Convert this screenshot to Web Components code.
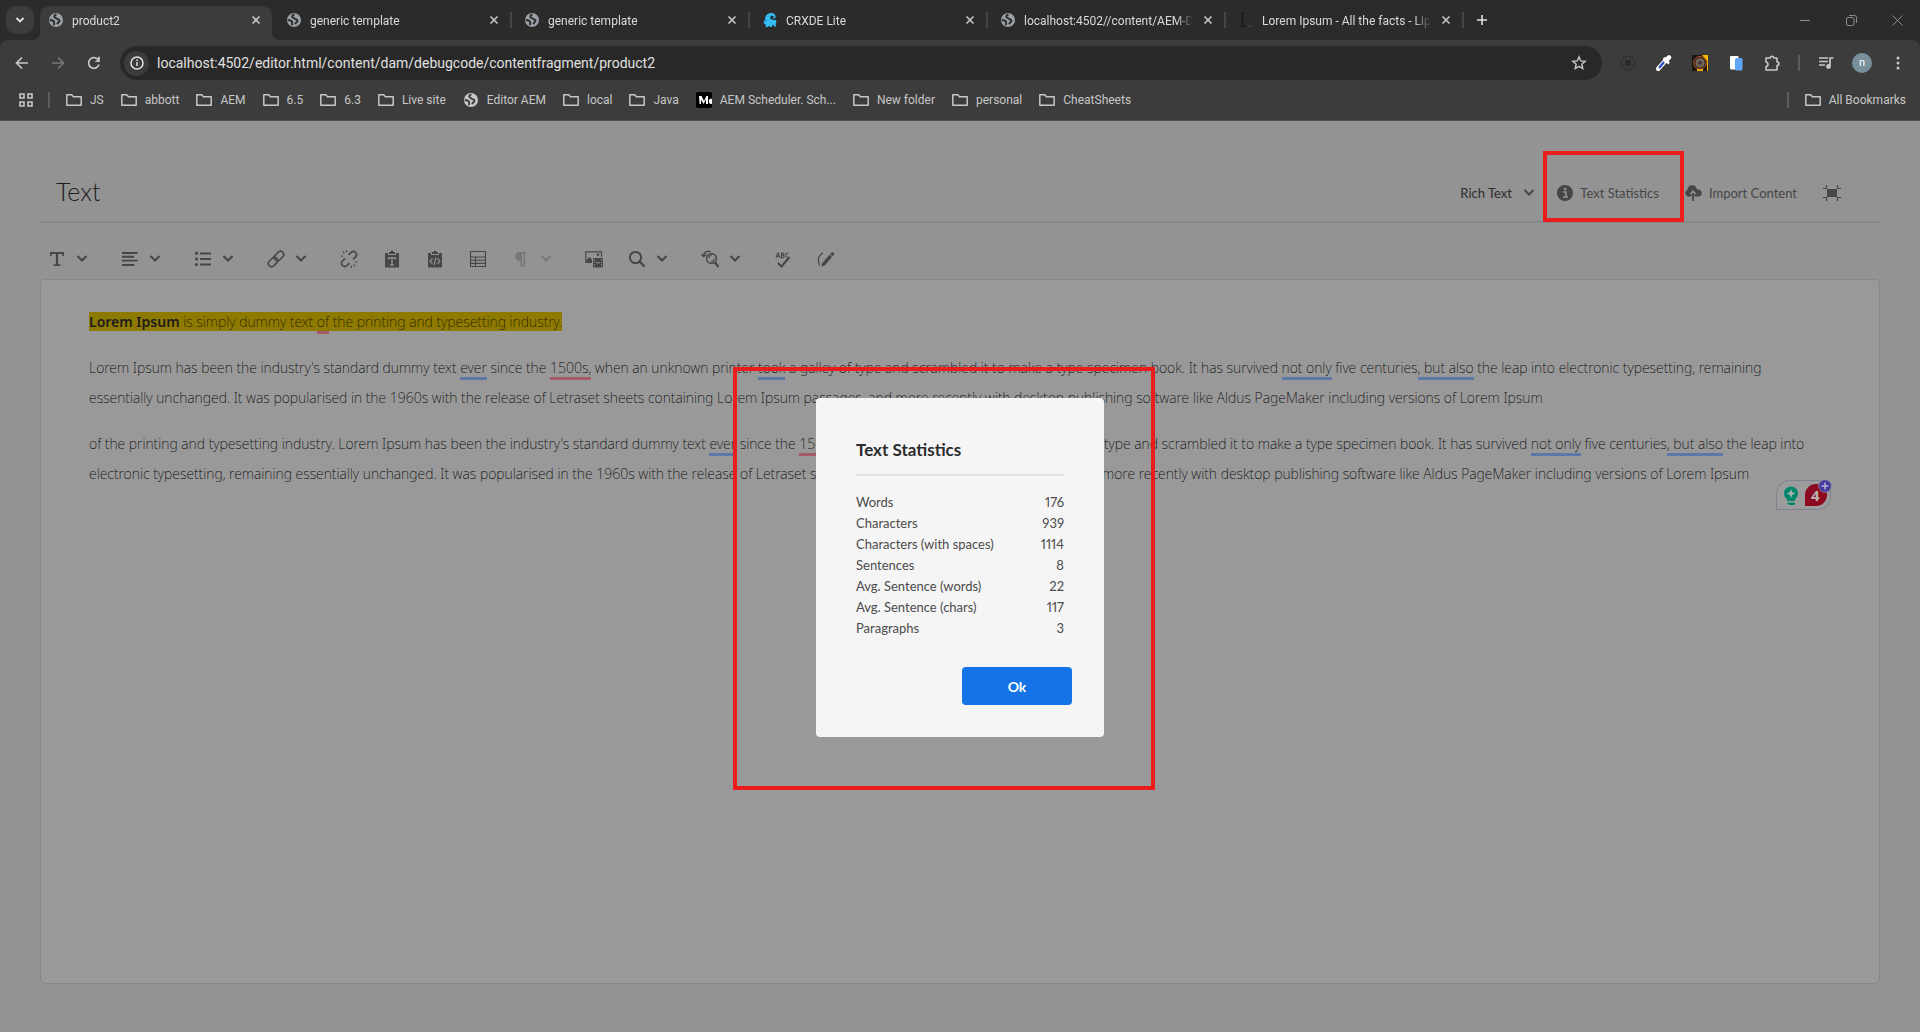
<!DOCTYPE html>
<html lang="en">
<head>
<meta charset="utf-8">
<title>product2</title>
<style>
html, body { margin: 0; height: 100%; }
body { font-family: Roboto, "Noto Sans", sans-serif; }
</style>
</head>
<body>
<app-window></app-window>

<template id="tpl-window">
<style>
:host { display: flex; flex-direction: column; min-height: 100vh; background: #939393; }
</style>
<browser-chrome></browser-chrome>
<editor-page></editor-page>
</template>

<template id="tpl-chrome">
<style>
:host { display: block; background: #2b2b2b; font-size: 12px; color: #e3e3e3; --ui: Roboto, "Noto Sans", sans-serif; font-family: var(--ui); }
button { border: 0; background: none; padding: 0; color: inherit; font: inherit; display: flex; align-items: center; justify-content: center; }
.strip { display: flex; height: 40px; }
.search { width: 28px; height: 28px; margin: 6px; border-radius: 10px; background: #3c3c3c; }
.tabs { display: flex; align-items: stretch; }
.new { width: 28px; }
.win { margin-left: auto; display: flex; color: #8d8d8d; }
.win button { width: 46px; }
.bars { background: #3c3c3c; border-radius: 8px 8px 0 0; border-bottom: 1px solid #4e4e4e; height: 80px; }
.nav { display: flex; align-items: center; height: 46px; padding: 0 4px 0 4px; color: #c7c7c7; }
.nav > button { width: 36px; height: 34px; }
.dim { color: #757575; }
.omni { flex: 1; display: flex; align-items: center; height: 34px; margin: 0 8px 0 8px; border-radius: 17px; background: #282828; }
.omni .info { width: 25px; height: 25px; border-radius: 13px; background: #3c3c3c; margin: 0 8px 0 4px; color: #e3e3e3; }
.omni input { flex: 1; min-width: 0; border: 0; padding: 0; background: none; outline: 0; color: #e0e0e0; font: 14px var(--ui); }
.omni .star { width: 46px; height: 34px; }
.sep { width: 2px; height: 16px; background: #5c5c5c; }
.avatar span { width: 20px; height: 20px; line-height: 19px; border-radius: 50%; background: #78909c; color: #fff; font-size: 11px; }
.marks { display: flex; align-items: center; height: 30px; padding: 0 14px 0 18px; margin-top: -1px; color: #c7c7c7; }
.marks .list { display: flex; gap: 17px; margin-left: 16px; }
.marks .sep { margin-left: 14px; }
.marks .end { margin-left: auto; display: flex; align-items: center; gap: 16px; }
</style>
<div class="strip">
  <button class="search" aria-label="Search tabs"><ui-icon name="chev-s"></ui-icon></button>
  <div class="tabs">
    <browser-tab icon="globe" active>product2</browser-tab>
    <browser-tab icon="globe">generic template</browser-tab>
    <browser-tab icon="globe">generic template</browser-tab>
    <browser-tab icon="crx">CRXDE Lite</browser-tab>
    <browser-tab icon="globe">localhost:4502//content/AEM-Dev</browser-tab>
    <browser-tab icon="lipsum">Lorem Ipsum - All the facts - Lipsum</browser-tab>
  </div>
  <button class="new" aria-label="New tab"><ui-icon name="plus"></ui-icon></button>
  <div class="win">
    <button aria-label="Minimize"><ui-icon name="min"></ui-icon></button>
    <button aria-label="Restore"><ui-icon name="restore"></ui-icon></button>
    <button aria-label="Close window"><ui-icon name="wclose"></ui-icon></button>
  </div>
</div>
<div class="bars">
  <div class="nav">
    <button aria-label="Back"><ui-icon name="back"></ui-icon></button>
    <button aria-label="Forward" class="dim"><ui-icon name="fwd"></ui-icon></button>
    <button aria-label="Reload"><ui-icon name="reload"></ui-icon></button>
    <div class="omni">
      <button class="info" aria-label="Site information"><ui-icon name="info-o"></ui-icon></button>
      <input aria-label="Address" value="localhost:4502/editor.html/content/dam/debugcode/contentfragment/product2">
      <button class="star" aria-label="Bookmark this page"><ui-icon name="star"></ui-icon></button>
    </div>
    <button aria-label="Recorder"><ui-icon name="ext-rec"></ui-icon></button>
    <button aria-label="Color picker"><ui-icon name="ext-pick"></ui-icon></button>
    <button aria-label="Lens"><ui-icon name="ext-lens"></ui-icon></button>
    <button aria-label="Copy"><ui-icon name="ext-copy"></ui-icon></button>
    <button aria-label="Extensions"><ui-icon name="puzzle"></ui-icon></button>
    <span style="padding:0 8px"><span class="sep" style="display:block"></span></span>
    <button aria-label="Media"><ui-icon name="media-q"></ui-icon></button>
    <button aria-label="Profile" class="avatar"><span>n</span></button>
    <button aria-label="Menu"><ui-icon name="dots"></ui-icon></button>
  </div>
  <div class="marks">
    <ui-icon name="apps"></ui-icon><span class="sep"></span>
    <div class="list">
      <book-mark>JS</book-mark><book-mark>abbott</book-mark><book-mark>AEM</book-mark>
      <book-mark>6.5</book-mark><book-mark>6.3</book-mark><book-mark>Live site</book-mark>
      <book-mark icon="globe-l">Editor AEM</book-mark><book-mark>local</book-mark><book-mark>Java</book-mark>
      <book-mark icon="medium">AEM Scheduler. Sch...</book-mark><book-mark>New folder</book-mark>
      <book-mark>personal</book-mark><book-mark>CheatSheets</book-mark>
    </div>
    <div class="end"><span class="sep"></span><book-mark>All Bookmarks</book-mark></div>
  </div>
</div>
</template>

<template id="tpl-tab">
<style>
:host { display: flex; align-items: center; width: 238px; padding: 6px 0 0 0; box-sizing: border-box; position: relative; }
.in { flex: 1; display: flex; align-items: center; height: 28px; padding: 0 0 6px 8px; margin-right: 6px; min-width: 0; }
.t { flex: 1; margin-left: 8px; padding-top: 2px; white-space: nowrap; overflow: hidden; -webkit-mask-image: linear-gradient(90deg, #000 90%, transparent); mask-image: linear-gradient(90deg, #000 90%, transparent); color: #dadada; }
button { border: 0; background: none; padding: 0; width: 16px; height: 16px; margin: 0 8px 0 7px; color: #c7c7c7; display: flex; align-items: center; justify-content: center; }
.bar { width: 2px; height: 16px; background: #454545; position: absolute; right: 4px; top: 12px; }
:host([active]) .in { background: #3c3c3c; border-radius: 10px 10px 0 0; }
:host([active]) .bar { display: none; }
:host([active])::before, :host([active])::after { content: ""; position: absolute; bottom: 0; width: 8px; height: 8px; }
:host([active])::before { left: -8px; background: radial-gradient(circle at 0 0, transparent 8px, #3c3c3c 8px); }
:host([active])::after { right: -2px; background: radial-gradient(circle at 100% 0, transparent 8px, #3c3c3c 8px); }
</style>
<div class="in"><ui-icon></ui-icon><span class="t"><slot></slot></span><button aria-label="Close tab"><ui-icon name="x"></ui-icon></button></div><span class="bar"></span>
</template>

<template id="tpl-mark">
<style>
:host { display: block; }
a { display: flex; align-items: center; gap: 8px; color: inherit; text-decoration: none; white-space: nowrap; font-size: 12px; }
</style>
<a href="#"><ui-icon></ui-icon><slot></slot></a>
</template>

<template id="tpl-page">
<style>
:host { flex: 1; display: flex; flex-direction: column; position: relative; --body: Lato, "Open Sans", sans-serif; font-family: var(--body); color: #1c1c1c; padding-bottom: 48px; }
header { display: flex; align-items: center; margin: 42px 40px 0; padding: 0 39px 0 16px; height: 58px; border-bottom: 2px solid #878787; }
h1 { margin: 0 auto 0 0; padding-bottom: 2px; font-size: 25px; font-weight: 300; line-height: 32px; }
button, select { font: 13px var(--body); border: 0; background: none; padding: 0; color: #464646; }
header button, .pick { padding-top: 2px; }
header button { display: flex; align-items: center; gap: 7px; position: relative; white-space: nowrap; }
.pick { display: flex; align-items: center; gap: 11px; margin-right: 22px; color: #464646; }
.pick select { appearance: none; color: #2c2c2c; }
.stats { margin-right: 25px; }
.imp { margin-right: 26px; }
.stats red-mark { position: absolute; inset: -32px -25px -21px -14px; }
.tools { display: flex; margin: 16px 36px 0; height: 40px; }
.box { flex: 1; margin: 0 40px; border: 1px solid #878787; border-radius: 5px; background: #999; padding: 27px 48px 0; position: relative; }
p { margin: 0 0 16px; font-family: "Noto Sans", sans-serif; font-size: 14px; font-weight: 225; line-height: 30px; white-space: nowrap; color: #080808; }
mark { background: #8f7a00; color: #1c1900; }
b { font-weight: 600; color: #1c1c1c; }
u { text-decoration: none; border-bottom: 3px solid #5d78a7; }
u.r { border-color: #a65c68; }
grammar-badge { position: absolute; right: 47px; top: 199px; }
.modal { position: absolute; inset: 0; display: flex; justify-content: center; align-items: flex-start; padding-top: 277px; }
</style>
<header>
  <h1>Text</h1>
  <label class="pick"><select aria-label="Text format"><option>Rich Text</option></select><ui-icon name="chev"></ui-icon></label>
  <button class="stats"><ui-icon name="info"></ui-icon>Text Statistics<red-mark></red-mark></button>
  <button class="imp"><ui-icon name="cloud"></ui-icon>Import Content</button>
  <button aria-label="Full screen"><ui-icon name="full"></ui-icon></button>
</header>
<div class="tools">
  <tool-button icon="T" label="Format" menu></tool-button>
  <tool-button icon="align" label="Alignment" menu></tool-button>
  <tool-button icon="list" label="Lists" menu></tool-button>
  <tool-button icon="link" label="Link" menu></tool-button>
  <tool-button icon="unlink" label="Unlink"></tool-button>
  <tool-button icon="pasteT" label="Paste as text"></tool-button>
  <tool-button icon="pasteH" label="Paste from Word"></tool-button>
  <tool-button icon="table" label="Table"></tool-button>
  <tool-button icon="para" label="Paragraph" menu off></tool-button>
  <tool-button icon="asset" label="Insert asset"></tool-button>
  <tool-button icon="find" label="Find" menu></tool-button>
  <tool-button icon="replace" label="Replace" menu></tool-button>
  <tool-button icon="abc" label="Spell check"></tool-button>
  <tool-button icon="annot" label="Annotate"></tool-button>
</div>
<div class="box">
  <p><mark><b>Lorem Ipsum</b> is simply dummy text <u class="r">of</u> the printing and typesetting industry.</mark></p>
  <p>Lorem Ipsum has been the industry's standard dummy text <u>ever</u> since the <u class="r">1500s,</u> when an unknown printer <u>took</u> a galley of type and scrambled it to make a type specimen book. It has survived <u>not only</u> five centuries<u>, but also</u> the leap into electronic typesetting, remaining<br>essentially unchanged. It was popularised in the 1960s with the release of Letraset sheets containing Lorem Ipsum passages, and more recently with desktop publishing software like Aldus PageMaker including versions of Lorem Ipsum</p>
  <p>of the printing and typesetting industry. Lorem Ipsum has been the industry's standard dummy text <u>ever</u> since the <u class="r">1500s,</u> when an unknown printer <u>took</u> a galley of type and scrambled it to make a type specimen book. It has survived <u>not only</u> five centuries<u>, but also</u> the leap into<br>electronic typesetting, remaining essentially unchanged. It was popularised in the 1960s with the release of Letraset sheets containing Lorem Ipsum passages, and more recently with desktop publishing software like Aldus PageMaker including versions of Lorem Ipsum</p>
  <grammar-badge></grammar-badge>
</div>
<div class="modal"><stats-dialog></stats-dialog></div>
</template>

<template id="tpl-tool">
<style>
:host { display: block; }
button { display: flex; align-items: center; gap: 10px; height: 40px; width: 43px; padding: 0 0 0 12px; border: 0; background: none; color: #464646; }
:host([menu]) button { width: 73px; }
:host([off]) { opacity: .35; }
</style>
<button><ui-icon></ui-icon></button>
</template>

<template id="tpl-red">
<style>:host { display: block; box-sizing: border-box; border: 4px solid #ea1c1c; pointer-events: none; }</style>
</template>

<template id="tpl-badge">
<style>
:host { display: block; }
</style>
<ui-icon name="grammar"></ui-icon>
</template>

<template id="tpl-dialog">
<style>
:host { display: block; position: relative; box-sizing: border-box; width: 288px; background: #f5f5f5; border-radius: 4px; padding: 40px 32px 32px 40px; color: #4b4b4b; }
h2 { margin: 0 8px 16px 0; padding-bottom: 12px; border-bottom: 2px solid #e1e1e1; font-size: 17px; line-height: 24px; font-weight: 700; color: #2c2c2c; }
table { border-collapse: collapse; width: 208px; font-size: 13px; line-height: 21px; font-variant-numeric: proportional-nums; }
th { font-weight: 400; text-align: left; padding: 0; }
td { text-align: right; padding: 0; }
button { display: block; margin: 28px 0 0 auto; width: 110px; height: 38px; border: 0; border-radius: 4px; background: #1473e6; color: #fff; font: 700 14px Lato, sans-serif; }
red-mark { position: absolute; inset: -31px -51px -53px -83px; }
</style>
<h2>Text Statistics</h2>
<table>
<tr><th>Words</th><td>176</td></tr>
<tr><th>Characters</th><td>939</td></tr>
<tr><th>Characters (with spaces)</th><td>1114</td></tr>
<tr><th>Sentences</th><td>8</td></tr>
<tr><th>Avg. Sentence (words)</th><td>22</td></tr>
<tr><th>Avg. Sentence (chars)</th><td>117</td></tr>
<tr><th>Paragraphs</th><td>3</td></tr>
</table>
<button>Ok</button>
<red-mark></red-mark>
</template>

<script>
const GLOBE = (bg, fg) => `<circle cx="8" cy="8" r="7" fill="${bg}"/><path d="M8.500 2.500C6 3 5.500 5 7.300 5.600c1.400.5 1 1.600 2.400 1.700 1.500.2 2.300 1 1.500 2.300-.6 1-1.700 1.200-2 2.600M2 7.500c1.300 1.200 3 .8 3.800 1.800.8 1 .2 2 .2 4" fill="none" stroke="${fg}" stroke-width="1.900"/>`;
const S = 'fill="none" stroke="currentColor"';
const ICONS = {
  'chev-s': [10, 10, `<path d="M1.500 3l3.500 3.500L8.500 3" ${S} stroke-width="1.800"/>`],
  chev: [12, 10, `<path d="M2 2.500l4 4 4-4" ${S} stroke-width="2" stroke-linecap="round"/>`],
  globe: [16, 16, GLOBE('#9aa0a6', '#2b2b2b')],
  'globe-l': [16, 16, GLOBE('#c7c7c7', '#3c3c3c')],
  crx: [16, 16, '<path d="M3 8C3 4 5 1 9 1c3 0 5 2 4.500 4.500C13 7 11 7 10.500 6c1 .2 1.500-.5 1-1.500-1-1.400-3.300-.8-3.300 1 0 2 2.600 2.500 5.600 2.500 1 1.500.7 3-.3 4l1 2.500h-2.300l-.7-1.500-1.500.2v1.800H7.700l-.5-1.600-1.500 1.600H3.500l.3-2.300C1.500 11.800 1 10 3 8z" fill="#35bdf2"/><path d="M1.500 10C2.500 8 4 9 5 8" stroke="#0f7fd0" fill="none"/><path d="M9.500 6.500c-.3-1.700 1-2.600 2-1.800" stroke="#10384a" fill="none"/>'],
  lipsum: [16, 16, '<path d="M2.500 1h4M4.500 1v13.500M2.500 14.500h6" stroke="#161616" stroke-width="1.200" fill="none"/><path d="M10 14.500h1M13 14.500h1" stroke="#555"/>'],
  medium: [16, 16, '<rect width="16" height="16" rx="2" fill="#000"/><path d="M3 4h2.500l2.500 5 2.500-5H12v8h-2V7.500L7.500 12 5 7.500V12H3.600zM16 7c-2-1-3.300.6-3.200 2.500.1 2 1.600 3 3.200 2.200z" fill="#fff"/>'],
  x: [10, 10, `<path d="M1.500 1.500l7 7M8.500 1.500l-7 7" ${S} stroke-width="1.600"/>`],
  plus: [12, 12, `<path d="M6 1v10M1 6h10" ${S} stroke-width="1.600"/>`],
  min: [10, 10, `<path d="M0 5.500h10" ${S}/>`],
  restore: [11, 11, `<rect x=".5" y="2.500" width="7.500" height="8" rx="1.500" ${S}/><path d="M3 .5h5.500a2 2 0 0 1 2 2V8" ${S}/>`],
  wclose: [11, 11, `<path d="M.5.5l10 10M10.500.5l-10 10" ${S}/>`],
  back: [16, 16, `<path d="M14 8H2.500M8 2.500L2.500 8 8 13.500" ${S} stroke-width="1.700"/>`],
  fwd: [16, 16, `<path d="M2 8h11.500M8 2.500L13.500 8 8 13.500" ${S} stroke-width="1.700"/>`],
  reload: [16, 16, `<path d="M13 9.500A5.300 5.300 0 1 1 12.300 5" ${S} stroke-width="1.700"/><path d="M13.800 1.800V7H8.600l2-1.700H12V1.800z" fill="currentColor"/>`],
  'info-o': [16, 16, `<circle cx="8" cy="8" r="6" ${S} stroke-width="1.500"/><path d="M8 7v4M8 4.500v1.400" ${S} stroke-width="1.500"/>`],
  star: [16, 16, `<path d="M8 1.800l1.700 4.100 4.500.4-3.400 2.900 1 4.400L8 11.300l-3.800 2.300 1-4.400L1.800 6.300l4.500-.4z" ${S} stroke-width="1.400"/>`],
  'ext-rec': [16, 16, '<circle cx="8" cy="8" r="6.700" fill="none" stroke="#303030" stroke-width="1.400"/><rect x="5" y="5" width="6" height="6" rx="1.500" fill="#2b2b2b"/>'],
  'ext-pick': [16, 16, '<path d="M2.200 13.800L10 5" stroke="#fff" stroke-width="4.600" stroke-linecap="round"/><path d="M9.500 5.500L13 2.500" stroke="#fff" stroke-width="4.500" stroke-linecap="round"/><path d="M7.500 3l5.500 5.500" stroke="#fff" stroke-width="2.500"/><path d="M3 13l5-6" stroke="#2f4fc4" stroke-width="2.400"/>'],
  'ext-lens': [16, 16, '<rect width="16" height="16" fill="#1c1613"/><path d="M10 0h6v16h-1V6z" fill="#fbb303"/><path d="M5 12.500h6V16H5z" fill="#fbb303"/><circle cx="8" cy="7.800" r="6.300" fill="#3a2a22" stroke="#b5562a"/><circle cx="8" cy="7.800" r="4" fill="#63564e" stroke="#85776c"/><rect x="6" y="6" width="4" height="4" rx="1" fill="#3c332e" stroke="#8b7d72" stroke-width=".6"/>'],
  'ext-copy': [16, 16, '<rect x="2" y="1" width="8.500" height="13.500" rx="1" fill="#fff"/><rect x="7" y="3" width="7.500" height="12.500" rx="1.500" fill="#62a8f8"/>'],
  puzzle: [18, 18, `<path d="M3 4h4.300c0-2.300 3.400-2.300 3.400 0H14v4c2.600 0 2.600 3.600 0 3.600V16H3v-3.500c2.600-.3 2.600-4.200 0-4.500z" ${S} stroke-width="1.600" stroke-linejoin="round"/>`],
  'media-q': [18, 16, `<path d="M2 3h9M2 6.500h9M2 10h6" ${S} stroke-width="1.500"/><path d="M13 11V3h3.500" ${S} stroke-width="1.700"/><circle cx="11.500" cy="11.500" r="2.400" fill="currentColor"/>`],
  dots: [16, 16, '<g fill="currentColor"><circle cx="8" cy="3" r="1.500"/><circle cx="8" cy="8" r="1.500"/><circle cx="8" cy="13" r="1.500"/></g>'],
  apps: [16, 16, `<path d="M2 2h4v4H2zM10 2h4v4h-4zM2 10h4v4H2zM10 10h4v4h-4z" ${S} stroke-width="1.600"/>`],
  folder: [16, 16, `<path d="M.8 13.200V2.800h5l1.600 1.900h7.800v8.500z" ${S} stroke-width="1.500" stroke-linejoin="round"/>`],
  info: [16, 16, '<circle cx="8" cy="8" r="8" fill="currentColor"/><path d="M6 7h3v5M6 12h5" stroke="#939393" stroke-width="1.600" fill="none"/><circle cx="8.200" cy="4" r="1.300" fill="#939393"/>'],
  cloud: [18, 16, '<path d="M4 11.500A3.500 3.500 0 0 1 3.200 5C4 2 5.500.3 8 .2c2.800 0 4.500 1.500 4.800 4 3 0 5 1.500 5 4s-2 3.300-4 3.300h-3.300V9h2L9 5 5.500 9h2v2.500z" fill="currentColor"/><path d="M9 8v8" stroke="currentColor" stroke-width="1.800"/>'],
  full: [18, 16, `<rect x="4" y="4" width="10" height="8" fill="currentColor"/><path d="M0 3.500h3.500V0M18 3.500h-3.500V0M0 12.500h3.500V16M18 12.500h-3.500V16" ${S} stroke-width="1.200"/>`],
  T: [18, 18, '<path d="M2 2h14v4h-1.700V4H10.100v10.200h2.300V16H5.600v-1.800h2.300V4H3.700v2H2z" fill="currentColor"/>'],
  align: [18, 18, `<path d="M1 3h15.500M1 6.800h12M1 10.600h15.500M1 15h12.500" ${S} stroke-width="1.900"/>`],
  list: [18, 18, `<path d="M6 3.500h11M6 9h11M6 14.500h11" ${S} stroke-width="1.900"/><g fill="currentColor"><circle cx="2.500" cy="3.200" r="1.600"/><circle cx="2.500" cy="9" r="1.600"/><circle cx="2.500" cy="14.500" r="1.600"/></g>`],
  link: [18, 18, `<g ${S} stroke-width="1.600" transform="rotate(-45 9 9)"><rect x="-.5" y="5.800" width="10.500" height="6.400" rx="3.200"/><rect x="8" y="5.800" width="10.500" height="6.400" rx="3.200"/></g>`],
  unlink: [18, 18, `<g ${S} stroke-width="1.700" transform="rotate(-45 9 9)"><path d="M6.500 12.200H3a3.200 3.200 0 0 1 0-6.400h3.500M11.500 5.800H15a3.200 3.200 0 0 1 0 6.400h-3.500"/></g><path d="M1 6l2 .3M3 1.500l1.300 2M6.500 0v2.300M17 12l-2-.3M15 16.500l-1.300-2M11.500 18v-2.300" ${S} stroke-width="1.100"/>`],
  pasteT: [18, 18, '<path d="M2 3h3v2h8V3h3v14.500H2zM6 4V2h1.500a1.500 1.500 0 0 1 3 0H12v2z" fill="currentColor"/><path d="M5.500 9.500V8h7v1.500M9 8v7M7.300 15h3.400" fill="none" stroke="#939393" stroke-width="1.300"/>'],
  pasteH: [18, 18, '<path d="M2 3h3v2h8V3h3v14.500H2zM6 4V2h1.500a1.500 1.500 0 0 1 3 0H12v2z" fill="currentColor"/><path d="M6.500 8.500L4 11.200l2.500 2.700M11.500 8.500l2.500 2.700-2.500 2.700M9.900 7.500l-1.800 7.300" fill="none" stroke="#939393" stroke-width="1.200"/>'],
  table: [18, 18, `<path d="M1.500 1.500h15v15h-15zM1.500 7h15M1.500 10.200h15M1.500 13.400h15M6.500 7v9.500" ${S} stroke-width="1.100"/>`],
  para: [18, 18, '<path d="M7 2h7v1.500h-1V17h-1.500V3.500H10V17H8.500v-6A4.500 4.500 0 0 1 7 2z" fill="currentColor"/>'],
  asset: [18, 18, `<path d="M7 12.500H.8V1.800h15.700v5" ${S} stroke-width="1.200"/><path d="M1 10.500L4.500 7 7 9.500v3H1z" fill="currentColor"/><circle cx="13" cy="4.700" r="1.300" fill="currentColor"/><path d="M8 8h10v9.500H8z" fill="currentColor"/><path d="M9.300 9v8M16.700 9v8" stroke="#939393" stroke-width="1" stroke-dasharray="1.300 1.200"/><path d="M11 12.800h4" stroke="#939393"/>`],
  find: [18, 18, `<circle cx="7.500" cy="7.500" r="5.600" ${S} stroke-width="2"/><path d="M11.500 11.500l5 5" ${S} stroke-width="2.400"/>`],
  replace: [18, 18, `<circle cx="10.500" cy="8.500" r="5" ${S} stroke-width="1.400"/><path d="M14 12.500l3.500 4.500" ${S} stroke-width="2.200"/><path d="M8 8c0-2 1-3 3-3M13 8.500c0 2-1 3.200-3 3.200" ${S} stroke-width="1.200"/><path d="M9.500 1.500C6 .5 3 2 2.500 6M.5 4l2 2.500L5.300 4.500" ${S} stroke-width="1.400"/>`],
  abc: [18, 18, `<path d="M4 13l3.500 3.500L15.500 7" ${S} stroke-width="2"/><path d="M2 8l1.800-5h.4L6 8M2.600 6.200h2.800M7.500 3v4.700h1.300c1.800 0 1.800-2.400 0-2.400H7.500h1.200c1.500 0 1.500-2.300 0-2.300zM14.500 3.500c-3.300-1.400-3.600 3.800-1 4" ${S} stroke-width="1.100"/>`],
  annot: [18, 18, `<path d="M6 3C2.500 5 1 8 1.500 11.500l.8 4" ${S} stroke-width="1.200"/><path d="M4.500 16.800l.5-3.300L14.500 2.500c1-1 3.500.5 2.500 2L8 15.200z" fill="currentColor"/><path d="M12.500 4l3 3" stroke="#939393"/>`],
  grammar: [56, 32, '<path d="M.5 30.500V14.500A13 13 0 0 1 13.500 1.500H42A12.500 12.500 0 0 1 54.500 14v4A12.500 12.500 0 0 1 42 30.500z" fill="#9c9c9c" stroke="#80808f"/><circle cx="15" cy="14.500" r="7" fill="#00866b"/><path d="M11 19h8v3h-8z" fill="#00866b"/><path d="M11.500 24h7v1.500h-5.500z" fill="#00866b" stroke="#00866b"/><path d="M15 10l1.300 3.200L19.500 14.500l-3.200 1.300L15 19l-1.300-3.200-3.200-1.300 3.200-1.300z" fill="#a5b5b0"/><path d="M29 27V16A11 11 0 0 1 40 5h0a11 11 0 0 1 0 22z" fill="#8c0a20"/><text x="35" y="22" font-family="Open Sans, sans-serif" font-size="15" font-weight="700" fill="#bdb2b4">4</text><circle cx="49" cy="7" r="6.300" fill="#4539a0" stroke="#8f8f9a" stroke-width=".8"/><path d="M49 3.500v7M45.500 7h7" stroke="#b5b3cc" stroke-width="1.500"/>']
};
const make = (host, id) => {
  const root = host.attachShadow({ mode: 'open' });
  root.append(document.getElementById(id).content.cloneNode(true));
  return root;
};
class UiIcon extends HTMLElement {
  static observedAttributes = ['name'];
  constructor() { super(); this.attachShadow({ mode: 'open' }); }
  attributeChangedCallback() {
    const [w, h, art] = ICONS[this.getAttribute('name')];
    this.shadowRoot.innerHTML = `<style>:host{display:block;flex:none}svg{display:block}</style><svg width="${w}" height="${h}" viewBox="0 0 ${w} ${h}" aria-hidden="true">${art}</svg>`;
  }
}
class BrowserTab extends HTMLElement {
  connectedCallback() { make(this, 'tpl-tab').querySelector('ui-icon').setAttribute('name', this.getAttribute('icon')); }
}
class BookMark extends HTMLElement {
  connectedCallback() { make(this, 'tpl-mark').querySelector('ui-icon').setAttribute('name', this.getAttribute('icon') || 'folder'); }
}
class ToolButton extends HTMLElement {
  connectedCallback() {
    const b = make(this, 'tpl-tool').querySelector('button');
    b.setAttribute('aria-label', this.getAttribute('label'));
    b.firstElementChild.setAttribute('name', this.getAttribute('icon'));
    if (this.hasAttribute('menu')) {
      const c = document.createElement('ui-icon');
      c.setAttribute('name', 'chev');
      b.append(c);
    }
  }
}
const simple = (tag, id) => customElements.define(tag, class extends HTMLElement { connectedCallback() { make(this, id); } });
customElements.define('ui-icon', UiIcon);
customElements.define('browser-tab', BrowserTab);
customElements.define('book-mark', BookMark);
customElements.define('tool-button', ToolButton);
simple('red-mark', 'tpl-red');
simple('grammar-badge', 'tpl-badge');
simple('stats-dialog', 'tpl-dialog');
simple('browser-chrome', 'tpl-chrome');
simple('editor-page', 'tpl-page');
simple('app-window', 'tpl-window');
</script>
</body>
</html>
